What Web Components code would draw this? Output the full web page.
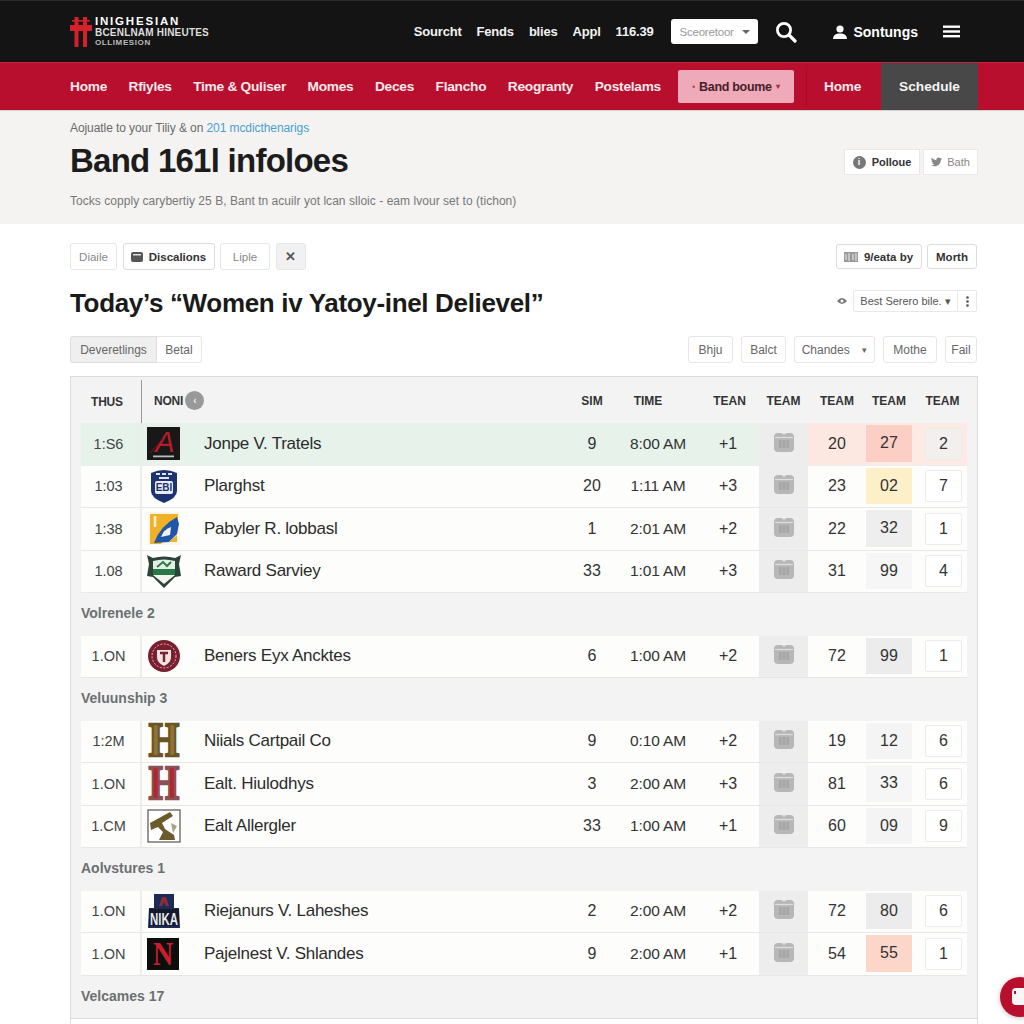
<!DOCTYPE html>
<html lang="en">
<head>
<meta charset="utf-8">
<title>Band infoloes</title>
<style>
html, body { margin: 0; height: 1024px; overflow: hidden; background: #fff; }
body { font-family: "Liberation Sans", Arial, sans-serif; color: #222; }
</style>
</head>
<body>

<top-bar></top-bar>
<main-nav></main-nav>
<page-hero></page-hero>

<page-body>
  <tool-row slot="filters" gap="5.5">
    <pill-btn w="47" tone="soft">Diaile</pill-btn>
    <pill-btn w="92" tone="strong" icon="doc">Discalions</pill-btn>
    <pill-btn w="50" tone="soft">Liple</pill-btn>
    <pill-btn w="30" tone="grey">✕</pill-btn>
    <tool-space></tool-space>
    <pill-btn w="86" h="25" tone="strong" icon="map">9/eata by</pill-btn>
    <pill-btn w="50" h="25" tone="strong">Morth</pill-btn>
  </tool-row>

  <title-row slot="title">Today’s “Women iv Yatoy-inel Delievel”</title-row>

  <tool-row slot="tabs" gap="8">
    <pill-btn w="87" tone="active">Deveretlings</pill-btn>
    <pill-btn w="45" tone="plain" tight>Betal</pill-btn>
    <tool-space></tool-space>
    <pill-btn w="45" tone="plain">Bhju</pill-btn>
    <pill-btn w="45" tone="plain">Balct</pill-btn>
    <pill-btn w="81" tone="plain">Chandes&nbsp;&nbsp;<small style="font-size:9px">▾</small></pill-btn>
    <pill-btn w="54" tone="plain">Mothe</pill-btn>
    <pill-btn w="32" tone="plain">Fail</pill-btn>
  </tool-row>

  <fixture-table slot="table">
    <fixture-group>
      <fixture-row time="1:S6" sim="9" at="8:00 AM" plus="+1" a="20" b="27" c="2" tone="lead" hot="#fbcfc3">
        <team-logo kind="arrow" slot="logo"></team-logo>Jonpe V. Tratels
      </fixture-row>
      <fixture-row time="1:03" sim="20" at="1:11 AM" plus="+3" a="23" b="02" c="7" hot="#fdf0c8">
        <team-logo kind="shield" slot="logo"></team-logo>Plarghst
      </fixture-row>
      <fixture-row time="1:38" sim="1" at="2:01 AM" plus="+2" a="22" b="32" c="1" hot="#eeeeee">
        <team-logo kind="swoosh" slot="logo"></team-logo>Pabyler R. lobbasl
      </fixture-row>
      <fixture-row time="1.08" sim="33" at="1:01 AM" plus="+3" a="31" b="99" c="4" hot="#f6f6f6">
        <team-logo kind="crest" slot="logo"></team-logo>Raward Sarviey
      </fixture-row>
    </fixture-group>

    <fixture-group label="Volrenele 2">
      <fixture-row time="1.ON" sim="6" at="1:00 AM" plus="+2" a="72" b="99" c="1" hot="#ececec">
        <team-logo kind="round" slot="logo"></team-logo>Beners Eyx Ancktes
      </fixture-row>
    </fixture-group>

    <fixture-group label="Veluunship 3">
      <fixture-row time="1:2M" sim="9" at="0:10 AM" plus="+2" a="19" b="12" c="6" hot="#f4f4f4">
        <team-logo kind="goldh" slot="logo"></team-logo>Niials Cartpail Co
      </fixture-row>
      <fixture-row time="1.ON" sim="3" at="2:00 AM" plus="+3" a="81" b="33" c="6" hot="#f6f6f6">
        <team-logo kind="redh" slot="logo"></team-logo>Ealt. Hiulodhys
      </fixture-row>
      <fixture-row time="1.CM" sim="33" at="1:00 AM" plus="+1" a="60" b="09" c="9" hot="#f4f4f4">
        <team-logo kind="bird" slot="logo"></team-logo>Ealt Allergler
      </fixture-row>
    </fixture-group>

    <fixture-group label="Aolvstures 1">
      <fixture-row time="1.ON" sim="2" at="2:00 AM" plus="+2" a="72" b="80" c="6" hot="#ececec">
        <team-logo kind="navy" slot="logo"></team-logo>Riejanurs V. Laheshes
      </fixture-row>
      <fixture-row time="1.ON" sim="9" at="2:00 AM" plus="+1" a="54" b="55" c="1" hot="#fbd6c9">
        <team-logo kind="blackn" slot="logo"></team-logo>Pajelnest V. Shlandes
      </fixture-row>
    </fixture-group>

    <fixture-group label="Velcames 17">
      <fixture-row blank></fixture-row>
    </fixture-group>
  </fixture-table>
</page-body>

<chat-fab></chat-fab>

<script>
// small helper, every element is just a shadow root with its own style + markup
function shadow(el, html) {
  el.attachShadow({ mode: 'open' }).innerHTML = html;
}

class TopBar extends HTMLElement {
  constructor() {
    super();
    shadow(this, `
    <style>
    :host { display: flex; align-items: center; height: 62px; box-sizing: border-box; background: #141414;
      border-top: 1px solid #2b2b2b; padding: 0 64px 0 70px; color: #fff; }
    .logo { display: flex; align-items: center; gap: 3px; }
    .lines { display: flex; flex-direction: column; font-weight: bold; }
    .l1 { font-size: 11.500px; line-height: 12px; letter-spacing: 1.800px; }
    .l2 { font-size: 10px; line-height: 11px; color: #ddd; letter-spacing: .2px; }
    .l3 { font-size: 8px; line-height: 10px; color: #bbb; letter-spacing: .6px; }
    .links { margin-left: auto; display: flex; gap: 15px; font-size: 13px; font-weight: bold; color: #f2f2f2; letter-spacing: -.2px; }
    .sel { margin-left: 18px; width: 87px; height: 25px; box-sizing: border-box; background: #fff; border-radius: 3px;
      color: #999; font-size: 11.500px; display: flex; align-items: center; justify-content: space-between; padding: 0 8px; letter-spacing: -.2px; }
    .sel i { width: 0; height: 0; border: 4px solid transparent; border-top-color: #666; border-bottom: 0; }
    .search { margin-left: 17px; display: block; }
    .user { margin-left: 36px; display: flex; align-items: center; gap: 6px; font-size: 14px; font-weight: bold; }
    .burger { margin-left: 25px; display: block; }
    </style>
    <div class="logo">
      <svg width="22" height="30" viewBox="0 0 22 30"><g fill="#d4202a">
        <rect x="4.500" y="0" width="4" height="30"/><rect x="13" y="0" width="4" height="30"/>
        <rect x="0" y="8" width="22" height="6"/><rect x="2" y="3" width="18" height="1.600"/></g></svg>
      <div class="lines"><span class="l1">INIGHESIAN</span><span class="l2">BCENLNAM HINEUTES</span><span class="l3">OLLIMESION</span></div>
    </div>
    <div class="links"><span>Sourcht</span><span>Fends</span><span>blies</span><span>Appl</span><span>116.39</span></div>
    <div class="sel">Sceoretoor<i></i></div>
    <svg class="search" width="22" height="22" viewBox="0 0 22 22" fill="none" stroke="#fff"><circle cx="9" cy="9" r="6.600" stroke-width="2.800"/><path d="M14 14l6 6" stroke-width="3.200" stroke-linecap="round"/></svg>
    <div class="user">
      <svg width="14" height="14" viewBox="0 0 14 14" fill="#fff"><circle cx="7" cy="4" r="3.600"/><path d="M0 14c0-4 3-5.600 7-5.600s7 1.600 7 5.600z"/></svg>
      <span>Sontungs</span>
    </div>
    <svg class="burger" width="17" height="13" viewBox="0 0 17 13" fill="#fff"><rect width="17" height="2.400" y=".5"/><rect width="17" height="2.400" y="5.300"/><rect width="17" height="2.400" y="10"/></svg>`);
  }
}

class MainNav extends HTMLElement {
  constructor() {
    super();
    shadow(this, `
    <style>
    :host { display: flex; align-items: center; height: 49px; box-sizing: border-box; background: #b80f2e;
      border-top: 1px solid #c9203c; border-bottom: 1px solid #d5d0ce; padding: 0 46px 0 70px;
      font-size: 13.700px; font-weight: bold; color: #fbe9ec; white-space: nowrap; }
    .links { display: flex; gap: 21.500px; letter-spacing: -.25px; width: 590px; }
    .band { margin-left: 18px; width: 116px; height: 33px; flex: none; background: #eeaab8; border-radius: 2px; color: #47202a;
      font-size: 12.500px; letter-spacing: -.3px; display: flex; align-items: center; justify-content: center; gap: 4px; }
    .band i { font-style: normal; font-size: 8px; color: #a63049; }
    .sep { width: 1px; align-self: stretch; margin: 3px 0 3px 12px; background: #a70d2a; }
    .home { margin-left: 17px; width: 57px; letter-spacing: -.2px; }
    .tab { width: 97px; align-self: stretch; background: #484848; display: flex; align-items: center; justify-content: center; color: #f4f4f4; }
    </style>
    <div class="links"><span>Home</span><span>Rfiyles</span><span>Time &amp; Quliser</span><span>Momes</span><span>Deces</span><span>Flancho</span><span>Reogranty</span><span>Postelams</span></div>
    <div class="band"><i>▪</i>Band boume<i>▾</i></div>
    <div class="sep"></div>
    <span class="home">Home</span>
    <div class="tab">Schedule</div>`);
  }
}

class PageHero extends HTMLElement {
  constructor() {
    super();
    shadow(this, `
    <style>
    :host { display: flex; align-items: flex-start; height: 113px; box-sizing: border-box; background: #f4f3f1; padding: 10px 46px 0 70px; }
    .crumb { font-size: 12px; line-height: 14px; color: #6a6a6a; letter-spacing: -.08px; }
    .crumb b { font-weight: normal; color: #4a9fd0; }
    h1 { margin: 6px 0 0; font-size: 33px; line-height: 40px; font-weight: bold; color: #1c1c1c; letter-spacing: -.75px; }
    p { margin: 12px 0 0; font-size: 12px; line-height: 16px; color: #777; letter-spacing: .04px; }
    .acts { margin-left: auto; margin-top: 28px; display: flex; gap: 3px; }
    .act { height: 26px; box-sizing: border-box; background: #fff; border: 1px solid #eae9e7; font-size: 11px; display: flex; align-items: center; justify-content: center; gap: 6px; }
    .a1 { width: 76px; font-weight: bold; color: #333; }
    .a2 { width: 55px; color: #888; gap: 5px; }
    .dot { width: 13px; height: 13px; border-radius: 50%; background: #777; color: #fff; font-size: 9px; line-height: 13px; text-align: center; }
    </style>
    <div>
      <div class="crumb">Aojuatle to your Tiliy &amp; on <b>201 mcdicthenarigs</b></div>
      <h1>Band 161l infoloes</h1>
      <p>Tocks copply carybertiy 25 B, Bant tn acuilr yot lcan slloic - eam lvour set to (tichon)</p>
    </div>
    <div class="acts">
      <div class="act a1"><span class="dot">i</span>Polloue</div>
      <div class="act a2"><svg width="11" height="10" viewBox="0 0 24 20" fill="#888"><path d="M24 2.400a10 10 0 0 1-2.800.800A5 5 0 0 0 23.300.500a10 10 0 0 1-3.100 1.200A4.900 4.900 0 0 0 11.800 6.100 14 14 0 0 1 1.700.900a4.900 4.900 0 0 0 1.500 6.500A5 5 0 0 1 1 6.800a4.900 4.900 0 0 0 3.900 4.900 5 5 0 0 1-2.200.100 4.900 4.900 0 0 0 4.600 3.400A10 10 0 0 1 0 17.200 14 14 0 0 0 21.500 5.600 10 10 0 0 0 24 2.400z"/></svg>Bath</div>
    </div>`);
  }
}

class PageBody extends HTMLElement {
  constructor() {
    super();
    shadow(this, `
    <style>
    :host { display: block; padding: 19px 46px 0 70px; background: #fff; }
    .gap-a { height: 20px; } .gap-b { height: 19px; } .gap-c { height: 13px; }
    </style>
    <slot name="filters"></slot><div class="gap-a"></div>
    <slot name="title"></slot><div class="gap-b"></div>
    <slot name="tabs"></slot><div class="gap-c"></div>
    <slot name="table"></slot>`);
  }
}

class ToolRow extends HTMLElement {
  constructor() {
    super();
    shadow(this, `<style>:host { display: flex; align-items: center; height: 27px; padding-right: 1px; }</style><slot></slot>`);
    this.style.gap = this.getAttribute('gap') + 'px';
  }
}

class ToolSpace extends HTMLElement {
  constructor() {
    super();
    shadow(this, `<style>:host { display: block; flex: 1; }</style>`);
  }
}

const pillIcons = {
  doc: '<svg width="12" height="10" viewBox="0 0 12 10"><rect width="12" height="10" rx="2" fill="#555"/><rect x="2" y="2" width="8" height="1.500" fill="#ddd"/></svg>',
  map: '<svg width="14" height="10" viewBox="0 0 14 10"><rect width="14" height="10" fill="#999"/><path d="M2 2v6M5 1v8M9 2v6M12 1v8" stroke="#eee"/></svg>'
};

class PillBtn extends HTMLElement {
  constructor() {
    super();
    const icon = pillIcons[this.getAttribute('icon')] || '';
    shadow(this, `
    <style>
    :host { display: flex; align-items: center; justify-content: center; gap: 6px; box-sizing: border-box; height: 27px;
      background: #fff; border: 1px solid #e6e6e6; border-radius: 3px; font-size: 12px; color: #555; white-space: nowrap; flex: none; }
    :host([tone="soft"]) { color: #888; font-size: 11.500px; }
    :host([tone="strong"]) { color: #333; font-weight: bold; font-size: 11.500px; border-color: #dcdcdc; }
    :host([tone="grey"]) { background: #f1f1f1; color: #555; font-size: 13px; font-weight: bold; }
    :host([tone="active"]) { background: #efefef; border-color: #dedede; color: #666; margin-right: -8px; border-radius: 3px 0 0 3px; }
    :host([tone="plain"]) { color: #666; }
    :host([tight]) { border-radius: 0 3px 3px 0; border-left: 0; }
    </style>${icon}<slot></slot>`);
    this.style.width = this.getAttribute('w') + 'px';
    if (this.getAttribute('h')) this.style.height = this.getAttribute('h') + 'px';
  }
}

class TitleRow extends HTMLElement {
  constructor() {
    super();
    shadow(this, `
    <style>
    :host { display: flex; align-items: center; height: 27px; }
    h2 { margin: 0; font-size: 26px; font-weight: bold; color: #1a1a1a; letter-spacing: -.33px; white-space: nowrap; }
    .sort { margin-left: auto; margin-right: 1px; margin-bottom: 5px; display: flex; align-items: center; height: 22px; font-size: 11px; color: #555; }
    .eye { width: 23px; text-align: center; }
    .box { height: 22px; box-sizing: border-box; border: 1px solid #e8e8e8; display: flex; align-items: center; justify-content: center; }
    .name { width: 105px; border-radius: 2px 0 0 2px; }
    .more { width: 19px; border-left: 0; border-radius: 0 2px 2px 0; }
    </style>
    <h2><slot></slot></h2>
    <div class="sort">
      <span class="eye"><svg width="10" height="8" viewBox="0 0 10 8"><path d="M0 4q5-6 10 0q-5 6-10 0z" fill="#777"/><circle cx="5" cy="4" r="1.500" fill="#fff"/></svg></span>
      <span class="box name">Best Serero bile. ▾</span>
      <span class="box more"><svg width="3" height="11" viewBox="0 0 3 11" fill="#555"><circle cx="1.500" cy="1.500" r="1.300"/><circle cx="1.500" cy="5.500" r="1.300"/><circle cx="1.500" cy="9.500" r="1.300"/></svg></span>
    </div>`);
  }
}

const rowCols = '61px 62px 1fr 54px 78px 62px 49px 58px 46px 55px';

class FixtureTable extends HTMLElement {
  constructor() {
    super();
    shadow(this, `
    <style>
    :host { display: block; background: #f3f3f3; border: 1px solid #dcdcdc; border-bottom: 0; padding: 0 10px; }
    .head { display: grid; grid-template-columns: ${rowCols}; height: 46px; align-items: center; font-size: 12px; font-weight: bold; color: #333; text-align: center; padding-top: 1px; box-sizing: border-box; }
    .thus { align-self: stretch; display: flex; align-items: center; padding-left: 10px; border-right: 1px solid #999; margin: 2px 0 0 0; letter-spacing: -.2px; }
    .noni { grid-column: 2 / 4; display: flex; align-items: center; gap: 2px; padding-left: 12px; letter-spacing: -.2px; }
    .noni i { width: 19px; height: 19px; border-radius: 50%; background: #999; color: #eee; font-style: normal; font-size: 10px; line-height: 19px; }
    </style>
    <div class="head">
      <span class="thus">THUS</span>
      <span class="noni">NONI <i>‹</i></span>
      <span>SIM</span><span style="padding-right:20px">TIME</span><span style="padding-left:3px">TEAN</span><span>TEAM</span><span>TEAM</span><span>TEAM</span><span style="padding-left:6px">TEAM</span>
    </div>
    <slot></slot>`);
  }
}

class FixtureGroup extends HTMLElement {
  constructor() {
    super();
    const label = this.getAttribute('label');
    shadow(this, `
    <style>
    :host { display: block; }
    .label { height: 42.500px; line-height: 40.500px; font-size: 14px; font-weight: bold; color: #6b7070; }
    </style>
    ${label ? `<div class="label">${label}</div>` : ''}<slot></slot>`);
  }
}

// little grey basket shown in the icon column
const basket = '<svg width="20" height="19" viewBox="0 0 20 19"><rect width="20" height="19" rx="4" fill="#b7b7b7"/><path d="M1 4.500h18" stroke="#dedede" stroke-width="1.200"/><path d="M7 0l3 2 3-2" fill="#ddd"/><rect x="5" y="7" width="10" height="8" fill="#a6a6a6"/><path d="M8 7v8M12 7v8" stroke="#b7b7b7"/></svg>';

class FixtureRow extends HTMLElement {
  constructor() {
    super();
    const v = n => this.getAttribute(n) || '';
    const lead = v('tone') === 'lead';
    const blank = this.hasAttribute('blank');
    shadow(this, `
    <style>
    :host { display: grid; grid-template-columns: ${rowCols}; height: 42.500px; box-sizing: border-box; background: #fdfdfb;
      border-bottom: 1px solid #e7e7e7; font-size: 16px; color: #333; align-items: stretch; text-align: center; }
    :host([blank]) { background: #fff; margin: 0 -10px; border-top: 1px solid #dcdcdc; }
    :host([tone="lead"]) { background: linear-gradient(to right, #e6f2ea 0, #e6f2ea 678px, #fdeae5 678px); border-bottom-color: #eee; }
    .c { display: flex; align-items: center; justify-content: center; }
    .time { font-size: 14.500px; color: #444; border-right: 2px solid #eceeec; padding-right: 4px; }
    .logo { justify-content: flex-start; padding-left: 5px; }
    .name { justify-content: flex-start; font-size: 17px; color: #2c2c2c; letter-spacing: -.25px; white-space: nowrap; }
    .at { font-size: 15.500px; letter-spacing: -.1px; }
    .ico { background: #ededed; padding-bottom: 3px; }
    .hot { margin: 2px 0 3px; }
    .rank { justify-content: flex-end; padding-right: 5px; }
    .rank span { width: 37px; height: 32px; box-sizing: border-box; border: 1px solid #ececec; border-radius: 2px; background: ${lead ? '#f2efec' : '#fff'}; display: flex; align-items: center; justify-content: center; }
    .a { background: ${lead ? '#fde7e1' : 'transparent'}; }
    </style>
    ${blank ? '' : `
    <div class="c time">${v('time')}</div>
    <div class="c logo"><slot name="logo"></slot></div>
    <div class="c name"><slot></slot></div>
    <div class="c">${v('sim')}</div>
    <div class="c at">${v('at')}</div>
    <div class="c">${v('plus')}</div>
    <div class="c ico">${basket}</div>
    <div class="c a">${v('a')}</div>
    <div class="c hot" style="background:${v('hot')}">${v('b')}</div>
    <div class="c rank"><span>${v('c')}</span></div>`}`);
  }
}

const slabH = (fill, line) => `<text transform="translate(17 32) scale(.85 1.04)" text-anchor="middle" font-family="Liberation Serif, serif" font-weight="bold" font-size="46" fill="${fill}" stroke="${line}" stroke-width="2.400">H</text>`;

const logoArt = {
  arrow: `<rect x="0" y="0" width="33" height="33" fill="#181818"/><text x="18" y="25" text-anchor="middle" font-family="Liberation Sans, sans-serif" font-style="italic" font-size="29" fill="#b81c2a">A</text><path d="M3 26L16 12" stroke="#8a1520" stroke-width="1"/><rect x="6" y="28.500" width="21" height="1.800" fill="#bbb"/>`,
  shield: `<path d="M4 4q13-6 26 0v18q0 7-13 12Q4 29 4 22z" fill="#1d3270"/><path d="M9 5h4M15 5h4M21 5h4M12 9h10" stroke="#dfe4ef" stroke-width="1.800"/><rect x="8" y="12" width="18" height="13" rx="2" fill="#e8ecf4"/><text x="17" y="22" text-anchor="middle" font-family="Liberation Sans, sans-serif" font-weight="bold" font-size="10" fill="#1d3270">EBI</text>`,
  swoosh: `<rect x="1" y="0" width="32" height="33" fill="#fbf6ea"/><path d="M3 2h28v10L14 32H3z" fill="#efb02a"/><path d="M7 31Q13 14 30 5l2 7-2 10-8 8z" fill="#1f56a8"/><path d="M14 25q3-8 10-10l-1 8z" fill="#f3f3f3"/><path d="M22 30l8-7v7z" fill="#efb02a"/><path d="M8 4v11" stroke="#fbf0c4" stroke-width="2.500"/>`,
  crest: `<path d="M0 1l6 3q11-3 22 0l6-3-2 9 2 12-6 1-11 11L6 23l-6-1 2-12z" fill="#2c4438"/><path d="M6 7q11-3 22 0v8H6z" fill="#e3eee5"/><path d="M6 15h22v6H6z" fill="#277a45"/><path d="M6 21h22l-11 9z" fill="#f3f5f0"/><path d="M10 13l6-5 4 4 4-4" stroke="#2b7a4a" stroke-width="2" fill="none"/>`,
  round: `<circle cx="17" cy="17" r="16" fill="#7a1f2e"/><circle cx="17" cy="17" r="12" fill="none" stroke="#d9b9bd" stroke-width="1" stroke-dasharray="2 1.500"/><path d="M10 11h14v7q0 6-7 9-7-3-7-9z" fill="#efe2e2"/><path d="M13 14h8M17 14v9" stroke="#7a1f2e" stroke-width="2.400"/>`,
  goldh: slabH('#8f7434', '#6a5526'),
  redh: slabH('#b3272d', '#8c5055'),
  bird: `<rect x="1" y="1" width="32" height="32" fill="#fff" stroke="#555" stroke-width="1.200"/><path d="M3 14L23 3l3 4-11 7 3 6 9 6 1 5H12l4-8-5-5-7 3z" fill="#6a5a2c"/><path d="M24 14l6 3-4 7z" fill="#a3a388"/>`,
  navy: `<path d="M7 0h20v14h5l1 20H1l1-20h5z" fill="#1c2c56"/><path d="M2 15h30v17H2z" fill="#141a2c"/><path d="M15 3h4l3 9h-3l-2-4-2 4h-3z" fill="#8c2c3a"/><text transform="translate(17 31) scale(.88 1.2)" text-anchor="middle" font-family="Liberation Sans, sans-serif" font-weight="bold" font-size="13" fill="#e6e8ee">NIKA</text>`,
  blackn: `<rect x="0" y="1" width="32" height="32" fill="#0d0d0d"/><text transform="translate(16 28) scale(.85 1)" text-anchor="middle" font-family="Liberation Serif, serif" font-weight="bold" font-size="33" fill="#c81f2b">N</text>`
};

class TeamLogo extends HTMLElement {
  constructor() {
    super();
    shadow(this, `
    <style>:host { display: block; width: 34px; height: 34px; } svg { display: block; overflow: visible; }</style>
    <svg width="34" height="34" viewBox="0 0 34 34">${logoArt[this.getAttribute('kind')] || ''}</svg>`);
  }
}

class ChatFab extends HTMLElement {
  constructor() {
    super();
    shadow(this, `
    <style>
    :host { position: fixed; left: 1000px; top: 977px; width: 40px; height: 40px; border-radius: 50%; background: #b80f2e; box-shadow: 0 1px 5px rgba(0,0,0,.25); }
    div { position: absolute; left: 12px; top: 11px; width: 24px; height: 17px; border-radius: 4px; background: #f6f6f6; }
    div::before { content: ""; position: absolute; left: 2px; top: 3px; width: 2px; height: 3px; background: #b80f2e; }
    </style><div></div>`);
  }
}

customElements.define('top-bar', TopBar);
customElements.define('main-nav', MainNav);
customElements.define('page-hero', PageHero);
customElements.define('page-body', PageBody);
customElements.define('tool-row', ToolRow);
customElements.define('tool-space', ToolSpace);
customElements.define('pill-btn', PillBtn);
customElements.define('title-row', TitleRow);
customElements.define('fixture-table', FixtureTable);
customElements.define('fixture-group', FixtureGroup);
customElements.define('fixture-row', FixtureRow);
customElements.define('team-logo', TeamLogo);
customElements.define('chat-fab', ChatFab);
</script>
</body>
</html>
